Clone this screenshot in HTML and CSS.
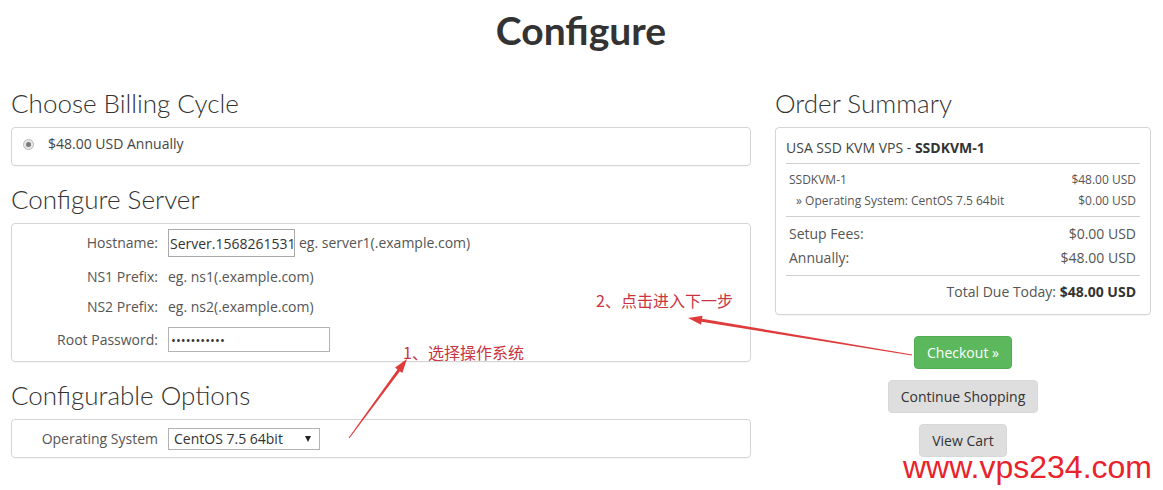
FILE: index.html
```html
<!DOCTYPE html>
<html lang="en">
<head>
<meta charset="utf-8">
<title>Configure</title>
<link rel="stylesheet" href="styles.css">
</head>
<body>
<div class="page">
  <h1 class="title">Configure</h1>
  <div class="layout">
    <div class="main">
      <h2 class="section-title">Choose Billing Cycle</h2>
      <div class="panel panel-billing">
        <label class="radio-row"><span class="radio"></span>$48.00 USD Annually</label>
      </div>

      <h2 class="section-title">Configure Server</h2>
      <div class="panel panel-server">
        <span class="label">Hostname:</span>
        <div class="field-inline">
          <input class="input input-host" type="text" value="Server.1568261531">
          <span class="hint">eg. server1(.example.com)</span>
        </div>
        <span class="label">NS1 Prefix:</span>
        <span class="hint">eg. ns1(.example.com)</span>
        <span class="label">NS2 Prefix:</span>
        <span class="hint">eg. ns2(.example.com)</span>
        <span class="label">Root Password:</span>
        <div class="field-inline">
          <input class="input input-pass" type="password" value="abcdefghijk">
        </div>
      </div>

      <h2 class="section-title">Configurable Options</h2>
      <div class="panel panel-options">
        <span class="label">Operating System</span>
        <div class="field-inline">
          <div class="select"><span class="select-text">CentOS 7.5 64bit</span><span class="select-arrow"></span></div>
        </div>
      </div>
    </div>

    <aside class="side">
      <h2 class="section-title">Order Summary</h2>
      <div class="summary-box">
        <div class="summary-head">USA SSD KVM VPS - <b>SSDKVM-1</b></div>
        <div class="summary-items">
          <div class="item-row"><span>SSDKVM-1</span><span>$48.00 USD</span></div>
          <div class="item-row item-sub"><span>» Operating System: CentOS 7.5 64bit</span><span>$0.00 USD</span></div>
        </div>
        <div class="summary-totals">
          <div class="item-row"><span>Setup Fees:</span><span>$0.00 USD</span></div>
          <div class="item-row"><span>Annually:</span><span>$48.00 USD</span></div>
        </div>
        <div class="summary-due">Total Due Today: <b>$48.00 USD</b></div>
      </div>
      <div class="actions">
        <button class="btn btn-success">Checkout »</button>
        <button class="btn btn-default">Continue Shopping</button>
        <button class="btn btn-default">View Cart</button>
      </div>
    </aside>
  </div>

  <svg class="annotations" width="1163" height="490" viewBox="0 0 1163 490">
    <polygon class="arrow" points="349.4,438.3 399.9,371.2 402.3,373.0 407,359 395.1,367.6 397.5,369.4 348.6,437.7"/>
    <polygon class="arrow" points="912.08,354.51 702.04,318.82 702.53,315.86 688,318 701.07,324.74 701.56,321.78 911.92,355.49"/>
  </svg>
  <div class="note note-2">2、点击进入下一步</div>
  <div class="note note-1">1、选择操作系统</div>
  <div class="watermark">www.vps234.com</div>
</div>
</body>
</html>
```

FILE: styles.css
```css
* { box-sizing: border-box; }

body {
  margin: 0;
  background: #fff;
  font-family: "Open Sans", "Liberation Sans", sans-serif;
  color: #333;
}

.page {
  position: relative;
  width: 1163px;
  height: 490px;
  overflow: hidden;
  padding: 0 12px 0 11px;
}

.title {
  margin: 7px 0 0;
  text-align: center;
  font-family: Lato, "Open Sans", sans-serif;
  font-weight: 700;
  font-size: 39px;
  line-height: 47px;
  color: #333;
}

.layout {
  display: grid;
  grid-template-columns: 740px 376px;
  column-gap: 24px;
  margin-top: 34px;
}

.section-title {
  margin: 0 0 9px;
  font-family: Lato, "Open Sans", sans-serif;
  font-weight: 300;
  font-size: 26px;
  line-height: 30px;
  color: #333;
}

.panel {
  border: 1px solid #d5d5d5;
  border-radius: 4px;
  box-shadow: 0 1px 1px rgba(0, 0, 0, 0.04);
  margin-bottom: 18px;
  font-size: 14px;
  color: #555;
}

.panel-billing {
  padding: 6px 11px 11px;
  line-height: 20px;
}

.radio-row {
  display: flex;
  align-items: center;
  color: #444;
}

.radio {
  width: 11px;
  height: 11px;
  border-radius: 50%;
  border: 1px solid #b8b8b8;
  background: #e8e8e8;
  display: inline-flex;
  align-items: center;
  justify-content: center;
  margin-right: 14px;
}

.radio::after {
  content: "";
  width: 5px;
  height: 5px;
  border-radius: 50%;
  background: #777;
}

.panel-server,
.panel-options {
  display: grid;
  grid-template-columns: 146px 1fr;
  column-gap: 10px;
  align-items: center;
  line-height: 20px;
}

.panel-server {
  padding: 5px 0 9px;
  grid-template-rows: 28px 20px 20px 25px;
  row-gap: 10px;
}

.panel-options {
  padding: 8px 0 7px;
}

.label {
  text-align: right;
  color: #555;
}

.field-inline {
  display: flex;
  align-items: center;
  gap: 4px;
}

.hint {
  color: #555;
}

.input {
  font-family: "Open Sans", "Liberation Sans", sans-serif;
  font-size: 14px;
  color: #333;
  background: #fff;
  margin: 0;
  outline: none;
  border-radius: 0;
}

.input-host {
  width: 127px;
  height: 28px;
  border: 1px solid #a9a9a9;
  padding: 0 1px;
}

.input-pass {
  width: 162px;
  height: 25px;
  border: 1px solid #b3b3b3;
  padding: 0 2px;
  font-size: 13px;
}

.select {
  width: 152px;
  height: 22px;
  border: 1px solid #b3b3b3;
  display: flex;
  align-items: center;
  justify-content: space-between;
  padding: 0 8px 0 5px;
  color: #333;
  background: #fff;
}

.select-arrow {
  width: 0;
  height: 0;
  border-left: 3px solid transparent;
  border-right: 3px solid transparent;
  border-top: 6px solid #222;
}

/* Order summary */
.summary-box {
  border: 1px solid #d5d5d5;
  border-radius: 4px;
  box-shadow: 0 1px 1px rgba(0, 0, 0, 0.04);
  padding: 10px 10px 12px;
  color: #555;
}

.summary-head {
  font-size: 14px;
  line-height: 20px;
  padding-bottom: 5px;
  border-bottom: 1px solid #cfcfcf;
  color: #444;
}

.summary-head b {
  color: #333;
  font-weight: 700;
}

.summary-items {
  padding: 5px 0;
  border-bottom: 1px solid #cfcfcf;
  font-size: 12px;
  line-height: 21px;
}

.item-row {
  display: flex;
  justify-content: space-between;
  padding: 0 4px 0 3px;
}

.item-sub span:first-child {
  padding-left: 7px;
}

.summary-totals {
  padding: 5px 0;
  border-bottom: 1px solid #cfcfcf;
  font-size: 14px;
  line-height: 24px;
}

.summary-due {
  padding: 6px 4px 0 0;
  text-align: right;
  font-size: 14px;
  line-height: 20px;
}

.summary-due b {
  color: #333;
}

.actions {
  display: flex;
  flex-direction: column;
  align-items: center;
  gap: 11px;
  margin-top: 21px;
}

.btn {
  height: 33px;
  padding: 0 12px;
  border-radius: 4px;
  font-family: "Open Sans", "Liberation Sans", sans-serif;
  font-size: 14px;
  line-height: 31px;
  cursor: pointer;
}

.btn-success {
  background: #5cb85c;
  border: 1px solid #52ad52;
  color: #fff;
}

.btn-default {
  background: #dedede;
  border: 1px solid #d8d8d8;
  color: #333;
}

/* Annotations overlay */
.annotations {
  position: absolute;
  left: 0;
  top: 0;
  pointer-events: none;
}

.arrow {
  fill: #e03b3b;
}

.note {
  position: absolute;
  font-family: "Noto Sans CJK SC", sans-serif;
  font-size: 16px;
  line-height: 20px;
  color: #c9343f;
  white-space: nowrap;
}

.note-2 { left: 596px; top: 290px; }
.note-1 { left: 403px; top: 342px; }

.watermark {
  position: absolute;
  left: 903px;
  top: 451px;
  font-family: "Liberation Sans", Arial, sans-serif;
  font-size: 32px;
  line-height: 32px;
  color: #e8232b;
  white-space: nowrap;
}
```
